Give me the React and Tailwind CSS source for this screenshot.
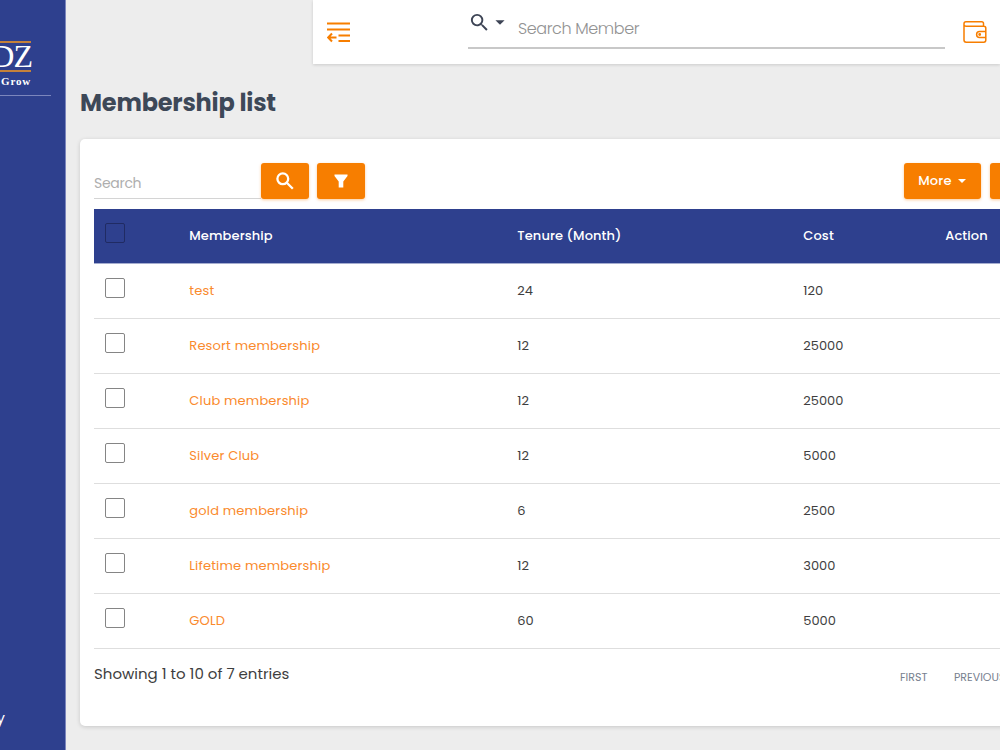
import React, { useState } from "react";
import { MdArrowDropDown, MdSearch } from "react-icons/md";

const memberships = [
  { id: 1, name: "test", tenure: 24, cost: 120 },
  { id: 2, name: "Resort membership", tenure: 12, cost: 25000 },
  { id: 3, name: "Club membership", tenure: 12, cost: 25000 },
  { id: 4, name: "Silver Club", tenure: 12, cost: 5000 },
  { id: 5, name: "gold membership", tenure: 6, cost: 2500 },
  { id: 6, name: "Lifetime membership", tenure: 12, cost: 3000 },
  { id: 7, name: "GOLD", tenure: 60, cost: 5000 },
];

const columns = "grid grid-cols-[95.3px_328px_286px_142px_1fr]";

function Checkbox({ checked, onChange, className }) {
  return (
    <button
      role="checkbox"
      aria-checked={checked}
      onClick={onChange}
      className={`ml-[11px] h-5 w-5 rounded-[2px] border ${checked ? "bg-[#f77e00]" : ""} ${className}`}
    />
  );
}

function MenuIcon() {
  return (
    <svg width="24" height="22" viewBox="0 0 24 22" fill="none" stroke="#f77e00" strokeWidth="2">
      <path d="M0 2.500H23M0 8.500H23M11.500 14.500H23M11.500 20H23" />
      <path d="M1 16.500H9.500M5 12.500L1.200 16.500L5 20.500" />
    </svg>
  );
}

function WalletIcon() {
  return (
    <svg width="24" height="24" viewBox="0 0 24 24" fill="none" stroke="#f77e00" strokeWidth="1.5">
      <path d="M20.500 6V3.500Q20.500 1.800 18.800 1.800H3Q1 1.800 1 3.800V20Q1 22.200 3.200 22.200H20.800Q22.800 22.200 22.800 20V8.200Q22.800 6.200 20.800 6.200H3Q1.500 6.200 1 5" />
      <path d="M22.800 11.500H16.600a3 3 0 0 0 0 6H22.800" />
      <circle cx="16.700" cy="14.500" r="0.700" fill="#f77e00" />
    </svg>
  );
}

function Sidebar() {
  return (
    <aside className="flex h-full w-[66px] shrink-0 flex-col justify-between overflow-hidden border-r border-[#7c86bd] bg-[#2e408e] text-white">
      <div className="flex flex-col">
        <div className="mt-[41px] flex h-[31px] w-[31px] justify-end border-y-2 border-[#c4813a] font-['Liberation_Serif',serif] text-[32px] leading-[27px] tracking-[-1px]">
          <span className="mr-[-1px]">DZ</span>
        </div>
        <div className="mt-px flex w-[31px] justify-end whitespace-nowrap font-['Liberation_Serif',serif] text-[11px] leading-4 font-bold tracking-[0.8px]">Grow</div>
        <div className="mt-[6px] h-px w-[51px] bg-[#7c86bd]" />
      </div>
      <div className="mb-[21px] flex w-[5px] justify-end text-[15px] leading-[22px]">y</div>
    </aside>
  );
}

function TopBar() {
  return (
    <header className="ml-[247px] flex h-16 shrink-0 bg-white shadow-[0_1px_3px_rgba(0,0,0,0.14)]">
      <button className="mt-[21px] ml-[14px] h-[22px] w-6"><MenuIcon /></button>
      <div className="ml-[117px] flex h-[49px] w-[477px] border-b-2 border-[#c8c8c8]">
        <MdSearch className="mt-[11px] size-[23px] shrink-0 text-[#3d4455]" />
        <MdArrowDropDown className="mt-[11px] -ml-[2px] size-[22px] shrink-0 text-[#3d4455]" />
        <input className="ml-[7px] mt-[17px] h-6 w-[300px] text-base font-light tracking-[-0.4px] outline-none placeholder:text-[#929292]" placeholder="Search Member" />
      </div>
      <button className="mt-[20px] ml-[18px] h-6 w-6"><WalletIcon /></button>
    </header>
  );
}

function Toolbar() {
  return (
    <div className="flex h-[70px] items-start pt-6">
      <input className="h-9 w-[167px] border-b border-[#d4d4d4] pt-[5px] text-[14px] tracking-[-0.3px] outline-none placeholder:text-[#aeaeae]" placeholder="Search" />
      <button className="flex h-9 w-12 items-center justify-center rounded-[3px] bg-[#f77e00] text-white shadow-[0_1px_3px_rgba(247,126,0,0.4)]">
        <svg width="18" height="18" viewBox="0 0 18 18" fill="none" stroke="#fff" strokeWidth="2.300">
          <circle cx="6.800" cy="6.800" r="5.400" />
          <path d="M10.800 10.800L16.800 16.800" />
        </svg>
      </button>
      <button className="ml-[8px] flex h-9 w-12 items-center justify-center rounded-[3px] bg-[#f77e00] shadow-[0_1px_3px_rgba(247,126,0,0.4)]">
        <svg width="14" height="14" viewBox="0 0 14 14" fill="#fff"><path d="M0.500 0.500H13.500V2L9.300 7.500V13.500H4.700V7.500L0.500 2Z" /></svg>
      </button>
      <button className="ml-[539px] flex h-9 w-[77px] items-center rounded-[3px] bg-[#f77e00] pl-[14px] text-[13px] font-medium text-white shadow-[0_1px_3px_rgba(247,126,0,0.4)]">
        <span className="w-[34px] tracking-[0.2px]">More</span>
        <svg className="ml-[6px]" width="8" height="4" viewBox="0 0 8 4" fill="#fff"><path d="M0 0H8L4 4Z" /></svg>
      </button>
      <button className="ml-[9px] h-9 w-20 rounded-[3px] bg-[#f77e00] shadow-[0_1px_3px_rgba(247,126,0,0.4)]" />
    </div>
  );
}

export default function App() {
  const [selected, setSelected] = useState([]);
  const allSelected = selected.length === memberships.length;

  function toggle(id) {
    setSelected((current) => (current.includes(id) ? current.filter((item) => item !== id) : [...current, id]));
  }

  return (
    <div className="flex h-[750px] w-[1000px] overflow-hidden bg-[#ededed] font-[Poppins,Inter,sans-serif] text-[#3e3e3e]">
      <Sidebar />
      <div className="flex min-w-0 flex-1 flex-col overflow-hidden">
        <TopBar />
        <main className="pl-[14px]">
          <h1 className="mt-[20px] h-[55px] text-[24px] leading-[37px] font-bold tracking-[-0.2px] whitespace-nowrap text-[#3d4858]">Membership list</h1>
          <section className="h-[587px] w-[1040px] rounded-[5px] bg-white pl-[14px] shadow-[0_1px_4px_rgba(0,0,0,0.16)]">
            <Toolbar />
            <div className={`${columns} h-[55px] border-b border-[#a5adcf] bg-[#2e408e] text-[13px] leading-[54px] font-medium tracking-[0.1px] text-white`}>
              <Checkbox className="mt-[14px] border-[#202b63]" checked={allSelected} onChange={() => setSelected(allSelected ? [] : memberships.map((item) => item.id))} />
              <span>Membership</span>
              <span>Tenure (Month)</span>
              <span>Cost</span>
              <span>Action</span>
            </div>
            {memberships.map((item) => (
              <div key={item.id} className={`${columns} h-[55px] border-b border-[#dedede] text-[13px] leading-[54px]`}>
                <Checkbox className="mt-[14px] border-[#858585]" checked={selected.includes(item.id)} onChange={() => toggle(item.id)} />
                <a className="tracking-[0.18px] text-[#fa8a2d]">{item.name}</a>
                <span>{item.tenure}</span>
                <span>{item.cost}</span>
              </div>
            ))}
            <div className="flex pt-[13px]">
              <span className="w-[806px] text-[15px] leading-6">Showing 1 to 10 of 7 entries</span>
              <span className="mt-[3px] w-[54px] text-[11px] leading-6 text-[#78818f]">FIRST</span>
              <span className="mt-[3px] text-[11px] leading-6 text-[#78818f]">PREVIOUS</span>
            </div>
          </section>
        </main>
      </div>
    </div>
  );
}
